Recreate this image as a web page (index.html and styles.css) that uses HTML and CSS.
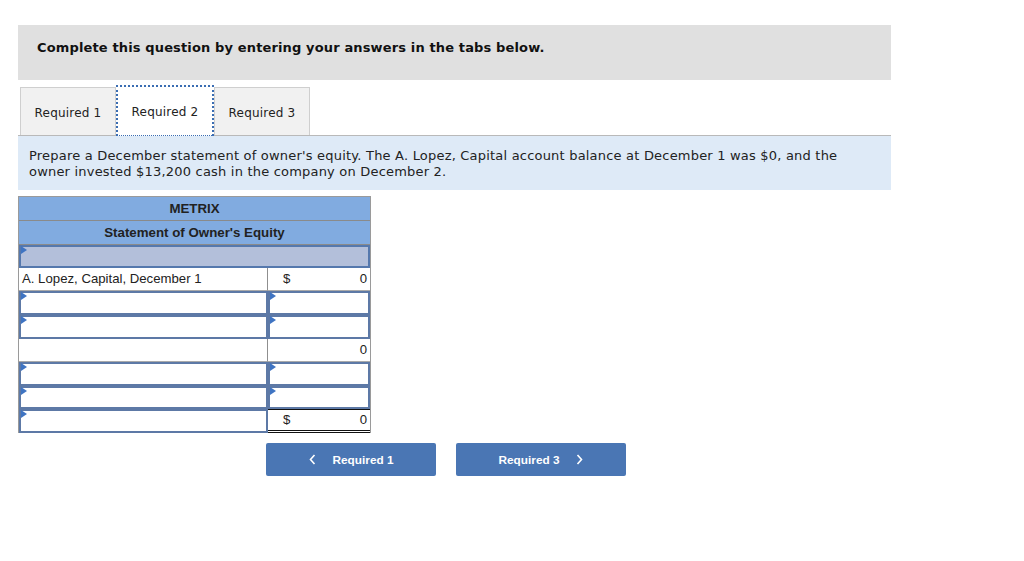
FILE: index.html
```html
<!DOCTYPE html>
<html>
<head>
<meta charset="utf-8">
<link rel="stylesheet" href="styles.css">
</head>
<body>
<div class="page">
  <div class="banner">Complete this question by entering your answers in the tabs below.</div>
  <div class="tabs">
    <div class="tab">Required 1</div>
    <div class="tab active">Required 2</div>
    <div class="tab">Required 3</div>
  </div>
  <div class="prompt">Prepare a December statement of owner's equity. The A. Lopez, Capital account balance at December 1 was $0, and the owner invested $13,200 cash in the company on December 2.</div>
  <div class="sheet">
    <div class="head">METRIX</div>
    <div class="head">Statement of Owner's Equity</div>
    <div class="subhead"><span class="mark"></span></div>
    <div class="row">
      <div class="cell label">A. Lopez, Capital, December 1</div>
      <div class="cell amt"><span>$</span><span>0</span></div>
    </div>
    <div class="row tall">
      <div class="cell inp"><span class="mark"></span></div>
      <div class="cell inp"><span class="mark"></span></div>
    </div>
    <div class="row tall">
      <div class="cell inp"><span class="mark"></span></div>
      <div class="cell inp"><span class="mark"></span></div>
    </div>
    <div class="row">
      <div class="cell label"></div>
      <div class="cell amt"><span></span><span>0</span></div>
    </div>
    <div class="row tall">
      <div class="cell inp"><span class="mark"></span></div>
      <div class="cell inp"><span class="mark"></span></div>
    </div>
    <div class="row">
      <div class="cell inp"><span class="mark"></span></div>
      <div class="cell inp"><span class="mark"></span></div>
    </div>
    <div class="row">
      <div class="cell inp"><span class="mark"></span></div>
      <div class="cell amt total"><span>$</span><span>0</span></div>
    </div>
  </div>
  <div class="nav">
    <div class="btn"><svg class="chev left" width="7" height="11" viewBox="0 0 7 11"><polyline points="5.5,1 1.5,5.5 5.5,10" fill="none" stroke="#fff" stroke-width="1.6"/></svg>Required 1</div>
    <div class="btn">Required 3<svg class="chev right" width="7" height="11" viewBox="0 0 7 11"><polyline points="1.5,1 5.5,5.5 1.5,10" fill="none" stroke="#fff" stroke-width="1.6"/></svg></div>
  </div>
</div>
</body>
</html>
```

FILE: styles.css
```css
html, body {
  margin: 0;
  padding: 0;
  background: #fff;
}
.page {
  padding: 25px 0 0 18px;
  font-family: "DejaVu Sans", Verdana, sans-serif;
  color: #1a1a1a;
}
.banner {
  width: 873px;
  height: 55px;
  box-sizing: border-box;
  background: #e0e0e0;
  padding: 15px 0 0 19px;
  font-weight: bold;
  font-size: 13px;
  letter-spacing: 0.14px;
  line-height: 16px;
  color: #111;
}
.tabs {
  display: flex;
  margin: 7px 0 0 2px;
  height: 48px;
}
.tab {
  width: 96px;
  box-sizing: border-box;
  height: 48px;
  border: 1px solid #cfcfcf;
  border-bottom: none;
  background: #f1f1f1;
  font-size: 12px;
  letter-spacing: 0.2px;
  padding-top: 2px;
  display: flex;
  align-items: center;
  justify-content: center;
  color: #222;
}
.tab.active {
  width: 98px;
  background: #fff;
  border: 1px dotted #3a6db3;
  border-width: 2px 2px 1px 2px;
  margin-top: -2px;
  height: 51px;
  position: relative;
  z-index: 1;
}
.prompt {
  width: 873px;
  box-sizing: border-box;
  height: 55px;
  background: #deeaf7;
  border-top: 1px solid #b9b9b9;
  padding: 12px 20px 0 11px;
  font-size: 13px;
  letter-spacing: 0.2px;
  line-height: 16px;
  color: #222;
}
.sheet {
  margin-top: 6px;
  width: 353px;
  border: 1px solid #9a9a9a;
  box-sizing: border-box;
  font-family: "Liberation Sans", Arial, sans-serif;
  font-size: 13.2px;
  color: #222;
}
.head {
  height: 24px;
  box-sizing: border-box;
  background: #81abe0;
  border-bottom: 1px solid #8a8a8a;
  text-align: center;
  font-weight: bold;
  font-size: 13.3px;
  line-height: 23px;
}
.subhead {
  height: 23px;
  background: #b3bfda;
  border: 2px solid #5578ad;
  box-sizing: border-box;
  position: relative;
}
.row {
  display: grid;
  grid-template-columns: 249px 102px;
  height: 23px;
}
.row.tall {
  height: 24px;
}
.cell {
  box-sizing: border-box;
  position: relative;
  height: 100%;
}
.cell.label {
  border-right: 1px solid #8f8f8f;
  border-bottom: 1px solid #aaa;
  padding: 0 0 0 3px;
  line-height: 22px;
}
.cell.amt {
  display: flex;
  justify-content: space-between;
  padding: 0 3px 0 15px;
  line-height: 22px;
  border-bottom: 1px solid #aaa;
}
.cell.amt.total {
  border-top: 1px solid #111;
  border-bottom: 3px double #111;
  line-height: 20px;
}
.cell.inp {
  border: 2px solid #5d79a6;
  background: #fff;
}
.mark {
  position: absolute;
  left: 0;
  top: 0;
  width: 0;
  height: 0;
  border-top: 4px solid transparent;
  border-bottom: 4px solid transparent;
  border-left: 6px solid #3f74c2;
  margin-top: -1px;
}
.nav {
  display: flex;
  gap: 20px;
  margin: 10px 0 0 248px;
}
.btn {
  width: 170px;
  height: 33px;
  background: #4a76b4;
  border-radius: 2px;
  color: #fff;
  font-family: "Liberation Sans", Arial, sans-serif;
  font-weight: bold;
  font-size: 11.8px;
  display: flex;
  align-items: center;
  justify-content: center;
}
.chev.left {
  margin-right: 17px;
}
.chev.right {
  margin-left: 17px;
}
```
